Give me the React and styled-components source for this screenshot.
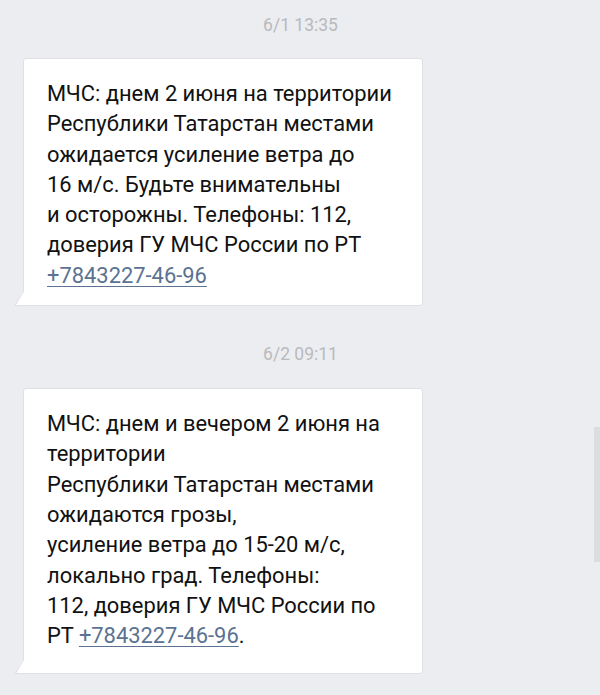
import React from "react";
import styled, { createGlobalStyle } from "styled-components";

const Global = createGlobalStyle`
  html, body { margin: 0; padding: 0; background: #ecedf0; }
  body { font-family: Roboto, "Noto Sans", sans-serif; }
`;

const Screen = styled.div`
  position: relative;
  width: 600px;
  height: 695px;
  overflow: hidden;
  background: #ecedf0;
  display: flex;
  flex-direction: column;
`;

const Stamp = styled.div`
  text-align: center;
  font-size: 17.5px;
  line-height: 20px;
  color: #b9babd;
  padding-left: 1px;
  margin-top: ${(p) => p.$top}px;
  margin-bottom: ${(p) => p.$bottom}px;
`;

const Bubble = styled.div`
  position: relative;
  margin-left: 23px;
  width: 400px;
  box-sizing: border-box;
  background: #fff;
  border: 1px solid #dfe0e3;
  border-radius: 3px;
  border-bottom-left-radius: 0;
  padding: ${(p) => p.$pad};
  font-size: 21.9px;
  line-height: 30.3px;
  color: #111;
  &::before {
    content: "";
    position: absolute;
    left: -10px;
    bottom: -1px;
    width: 11px;
    height: 16px;
    background: #dfe0e3;
    clip-path: polygon(100% 0, 100% 100%, 0 100%);
  }
  &::after {
    content: "";
    position: absolute;
    left: -8px;
    bottom: 0;
    width: 9px;
    height: 15px;
    background: #fff;
    clip-path: polygon(100% 0, 100% 100%, 0 100%);
  }
`;

const Line = styled.div`
  white-space: nowrap;
`;

const Phone = styled.a`
  color: #5b7293;
  text-decoration: underline;
  text-underline-offset: 3px;
  text-decoration-thickness: 1px;
`;

const ScrollThumb = styled.div`
  position: absolute;
  right: 0;
  top: 427px;
  width: 6px;
  height: 135px;
  background: #dcdde0;
`;

export default function App() {
  return (
    <Screen>
      <Global />
      <Stamp $top={15} $bottom={23}>6/1 13:35</Stamp>
      <Bubble $pad="20px 10px 14px 23px">
        <Line>МЧС: днем 2 июня на территории</Line>
        <Line>Республики Татарстан местами</Line>
        <Line>ожидается усиление ветра до</Line>
        <Line>16 м/с. Будьте внимательны</Line>
        <Line>и осторожны. Телефоны: 112,</Line>
        <Line>доверия ГУ МЧС России по РТ</Line>
        <Line>
          <Phone href="#">+7843227-46-96</Phone>
        </Line>
      </Bubble>
      <Stamp $top={38} $bottom={24}>6/2 09:11</Stamp>
      <Bubble $pad="20px 10px 22px 23px">
        <Line>МЧС: днем и вечером 2 июня на</Line>
        <Line>территории</Line>
        <Line>Республики Татарстан местами</Line>
        <Line>ожидаются грозы,</Line>
        <Line>усиление ветра до 15-20 м/с,</Line>
        <Line>локально град. Телефоны:</Line>
        <Line>112, доверия ГУ МЧС России по</Line>
        <Line>
          РТ <Phone href="#">+7843227-46-96</Phone>.
        </Line>
      </Bubble>
      <ScrollThumb />
    </Screen>
  );
}
